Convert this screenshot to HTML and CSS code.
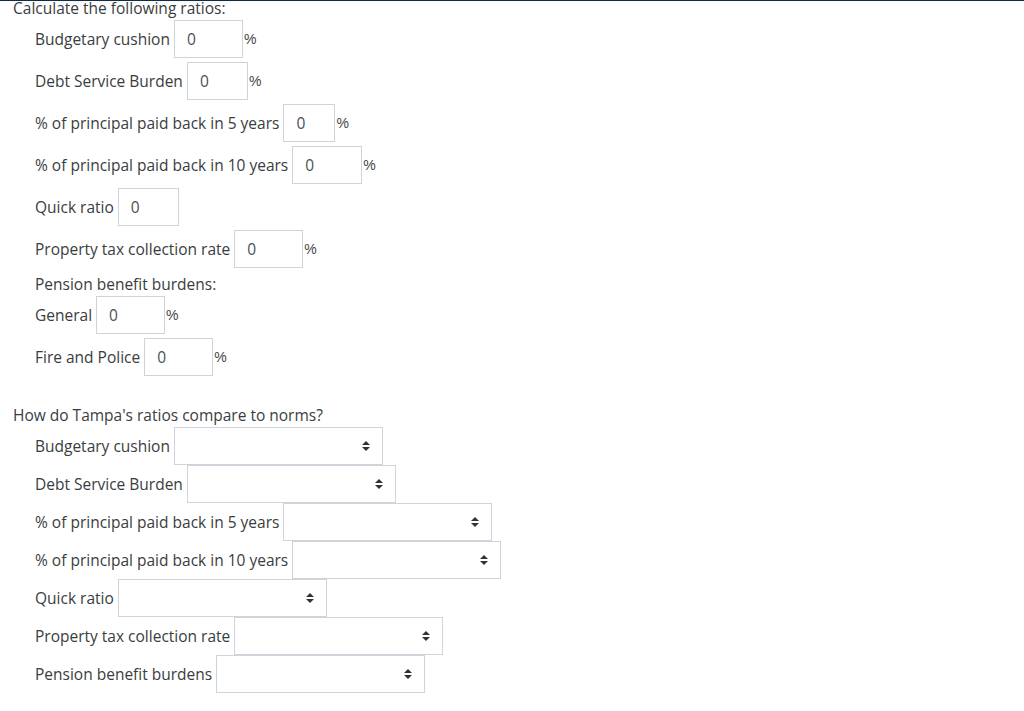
FILE: index.html
```html
<!DOCTYPE html>
<html>
<head>
<meta charset="utf-8">
<link rel="stylesheet" href="styles.css">
</head>
<body>
<div class="topline"></div>
<div class="page">
  <div class="heading">Calculate the following ratios:</div>
  <div class="group">
    <div class="row"><span class="lbl">Budgetary cushion</span><span class="inp w69">0</span><span class="pct">%</span></div>
    <div class="row"><span class="lbl">Debt Service Burden</span><span class="inp w61">0</span><span class="pct">%</span></div>
    <div class="row"><span class="lbl">% of principal paid back in 5 years</span><span class="inp w52">0</span><span class="pct">%</span></div>
    <div class="row"><span class="lbl">% of principal paid back in 10 years</span><span class="inp w70">0</span><span class="pct">%</span></div>
    <div class="row"><span class="lbl">Quick ratio</span><span class="inp w61">0</span></div>
    <div class="row"><span class="lbl">Property tax collection rate</span><span class="inp w69">0</span><span class="pct">%</span></div>
    <div class="sub">Pension benefit burdens:</div>
    <div class="row"><span class="lbl">General</span><span class="inp w69">0</span><span class="pct">%</span></div>
    <div class="row"><span class="lbl">Fire and Police</span><span class="inp w69">0</span><span class="pct">%</span></div>
  </div>
  <div class="heading second">How do Tampa's ratios compare to norms?</div>
  <div class="group selects">
    <div class="srow"><span class="lbl">Budgetary cushion</span><span class="sel"><span class="arrows"></span></span></div>
    <div class="srow"><span class="lbl">Debt Service Burden</span><span class="sel"><span class="arrows"></span></span></div>
    <div class="srow"><span class="lbl">% of principal paid back in 5 years</span><span class="sel"><span class="arrows"></span></span></div>
    <div class="srow"><span class="lbl">% of principal paid back in 10 years</span><span class="sel"><span class="arrows"></span></span></div>
    <div class="srow"><span class="lbl">Quick ratio</span><span class="sel"><span class="arrows"></span></span></div>
    <div class="srow"><span class="lbl">Property tax collection rate</span><span class="sel"><span class="arrows"></span></span></div>
    <div class="srow"><span class="lbl">Pension benefit burdens</span><span class="sel"><span class="arrows"></span></span></div>
  </div>
</div>
</body>
</html>
```
FILE: styles.css
```css
html, body {
  margin: 0;
  padding: 0;
  background: #fff;
}
body {
  font-family: "Open Sans", "Liberation Sans", sans-serif;
  font-size: 15.5px;
  color: #3a3d40;
  overflow: hidden;
}
.topline {
  height: 1px;
  background: #0f2b4c;
  box-shadow: 0 1px 3px rgba(0,0,0,0.08);
}
.page {
  padding-left: 13px;
}
.heading {
  line-height: 19px;
  margin-top: -2px;
  height: 21px;
}
.heading.second {
  margin-top: 29px;
  height: 22px;
  line-height: 20px;
}
.group {
  padding-left: 22px;
}
.row {
  display: flex;
  align-items: center;
  height: 38px;
  margin-bottom: 4px;
}
.lbl {
  white-space: nowrap;
  margin-right: 4px;
}
.inp {
  box-sizing: border-box;
  height: 38px;
  border: 1px solid #ced4da;
  padding-left: 12px;
  line-height: 36px;
  color: #495057;
}
.w69 { width: 69px; }
.w61 { width: 61px; }
.w52 { width: 52px; }
.w70 { width: 70px; }
.pct {
  margin-left: 1px;
  font-family: "Liberation Sans", sans-serif;
  font-size: 14px;
  color: #444;
  letter-spacing: -1px;
}
.sub {
  line-height: 20px;
  margin-top: 6px;
  margin-bottom: 2px;
}
.srow {
  display: flex;
  align-items: center;
  height: 38px;
}
.sel {
  box-sizing: border-box;
  width: 209px;
  height: 38px;
  border: 1px solid #ced4da;
  position: relative;
}
.arrows {
  position: absolute;
  right: 12px;
  top: 13px;
  width: 8px;
  height: 10px;
}
.arrows::before, .arrows::after {
  content: "";
  position: absolute;
  left: 0;
  border-left: 4px solid transparent;
  border-right: 4px solid transparent;
}
.arrows::before {
  top: 0;
  border-bottom: 4px solid #333;
}
.arrows::after {
  top: 6px;
  border-top: 4px solid #333;
}
```
